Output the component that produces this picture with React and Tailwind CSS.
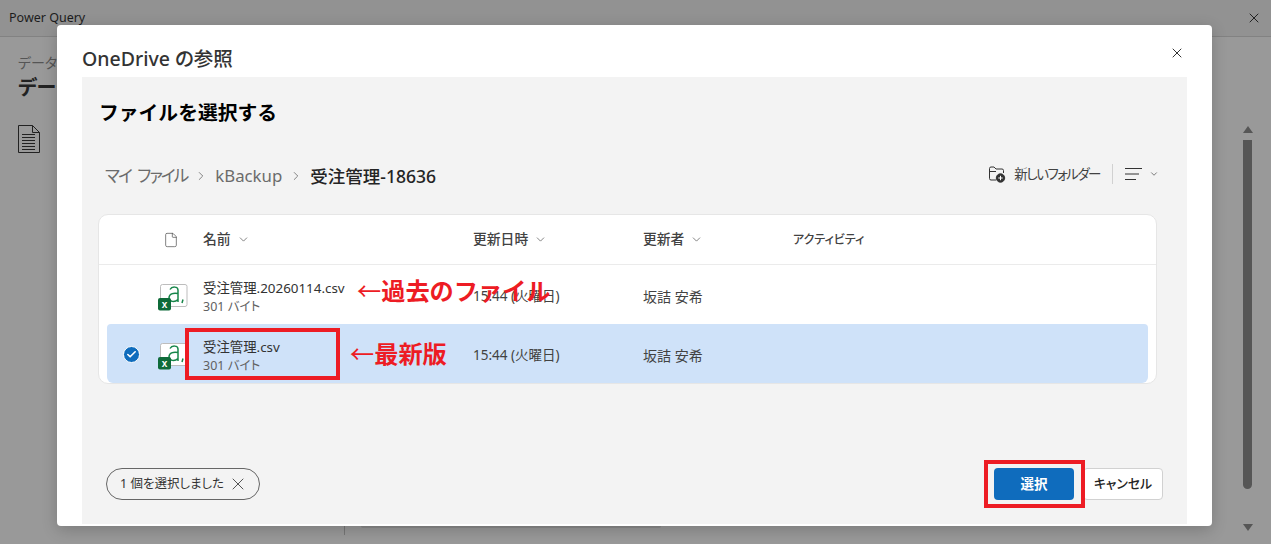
import { ChevronDown, ChevronRight, X, Check, File } from "lucide-react";

const font = "font-['Noto_Sans','Noto_Sans_CJK_JP',sans-serif] [font-feature-settings:'palt']";

function ExcelIcon() {
  return (
    <svg width="30" height="28" viewBox="0 0 30 28" className="mt-[1px] shrink-0">
      <rect x="2.500" y="1.500" width="26.500" height="22" rx="2" fill="#fff" stroke="#bdbdbd" />
      <path d="M12 6.500c2-3.500 8-3 8 .5v12M20 10.500c-5-1-9 .5-9 4.500s6 4.500 9 1.500M25 16.500l-1 3.500" fill="none" stroke="#17864a" strokeWidth="1.500" />
      <rect x="0" y="15" width="13" height="12.500" rx="2" fill="#0f6b3a" />
      <text x="6.500" y="24.500" textAnchor="middle" fontSize="10" fontWeight="700" fill="#fff" fontFamily="Liberation Sans, sans-serif">x</text>
    </svg>
  );
}

function HeaderCell({ label, className }) {
  return (
    <div className={`flex items-center gap-[6px] text-[13.800px] font-medium text-[#424242] ${className}`}>
      {label}
      <ChevronDown size={13} strokeWidth={1.2} className="text-[#424242]" />
    </div>
  );
}

function FileRow({ name, selected }) {
  return (
    <div className={`mx-[8px] flex h-[59px] items-center pt-[4px] ${selected ? "rounded-b-[6px] rounded-t-[4px] bg-[#cfe2f9]" : ""}`}>
      <div className="flex w-[51px] justify-center pb-[2px] pr-[3px]">
        {selected && (
          <div className="flex h-[17px] w-[17px] items-center justify-center rounded-full border border-white bg-[#0f6cbd]">
            <Check size={11} strokeWidth={3.5} className="text-white" />
          </div>
        )}
      </div>
      <ExcelIcon />
      <div className="ml-[15px] w-[270px] leading-none">
        <div className="text-[13.400px] leading-[18px] text-[#323232]">{name}</div>
        <div className="mt-[2px] text-[12.500px] leading-[16px] text-[#616161]">301 バイト</div>
      </div>
      <div className="w-[170px] text-[13.500px] text-[#424242]">15:44 (火曜日)</div>
      <div className="text-[14px] text-[#424242]">坂詰 安希</div>
    </div>
  );
}

export default function App() {
  return (
    <div className={`relative h-[544px] w-[1271px] overflow-hidden bg-[#999999] ${font}`}>
      {/* page behind the dialog */}
      <div className="flex h-[37px] items-center justify-between border-b border-[#828282] bg-[#929292] pl-[9px] pr-[9px]">
        <span className="text-[12.500px] text-[#1c1c1c]">Power Query</span>
        <X size={16} strokeWidth={1.500} className="text-[#222]" />
      </div>
      <div className="pl-[18px] pt-[17px]">
        <div className="text-[14px] leading-[18px] text-[#555]">データ</div>
        <div className="mt-[3px] text-[20px] font-bold leading-[26px] text-[#222]">データ</div>
        <svg width="22" height="28" viewBox="0 0 22 28" className="mt-[24px]" fill="none" stroke="#222" strokeWidth="1">
          <path d="M.500.500h14l7 7v20H.500zM14.500.500v7h7M4 9.500h13M4 12.500h13M4 15.500h13M4 18.500h13M4 21.500h13M4 24.500h13" />
        </svg>
      </div>
      <div className="absolute left-[1243px] top-[140px] h-[349px] w-[9px] rounded-b-full bg-[#565656]" />
      <div className="absolute left-[1243px] top-[126px] h-0 w-0 border-x-[5px] border-b-[7px] border-x-transparent border-b-[#565656]" />
      <div className="absolute left-[1243px] top-[524px] h-0 w-0 border-x-[5px] border-t-[7px] border-x-transparent border-t-[#565656]" />
      <div className="absolute left-[344px] top-[526px] h-[9px] w-px bg-[#777]" />
      <div className="absolute left-[361px] top-[526px] h-[2px] w-[300px] rounded-b bg-[#8a8a8a]" />

      {/* dialog */}
      <div className="absolute left-[57px] top-[25px] flex h-[501px] w-[1155px] flex-col rounded-[4px] bg-white px-[25px] shadow-[0_4px_16px_rgba(0,0,0,0.2)]">
        <div className="flex h-[52px] shrink-0 items-center justify-between pt-[16px]">
          <span className="text-[19.500px] font-medium text-[#333]">OneDrive の参照</span>
          <X size={16} strokeWidth={1.500} className="mr-[2px] mt-[-13px] text-[#333]" />
        </div>
        <div className="flex h-[447px] flex-col bg-[#f3f3f3] px-[16px]">
          <h2 className="ml-[1px] pt-[22px] text-[19.800px] font-bold leading-[28px] text-black [font-feature-settings:normal]">ファイルを選択する</h2>
          <div className="mt-[35px] flex h-[28px] w-[1061px] items-center justify-between pl-[7px]">
            <div className="flex items-center text-[16.800px] text-[#6b6b6b]">
              <span className="tracking-[-2px] [word-spacing:4px]">マイ ファイル</span>
              <ChevronRight size={14} strokeWidth={1.2} className="mx-[7px] text-[#555]" />
              <span>kBackup</span>
              <ChevronRight size={14} strokeWidth={1.2} className="mx-[7px] text-[#555]" />
              <span className="text-[17.500px] font-medium text-[#242424]">受注管理-18636</span>
            </div>
            <div className="mb-[4px] flex items-center text-[13.500px] text-[#424242]">
              <svg width="18" height="18" viewBox="0 0 18 18" fill="none" stroke="#333" strokeWidth="1">
                <path d="M8 15H3a1.500 1.500 0 0 1-1.500-1.500v-10A1.500 1.500 0 0 1 3 2h3l2 2h6a1.500 1.500 0 0 1 1.500 1.500V8M1.500 6.500H8" />
                <circle cx="12.500" cy="13" r="4.200" fill="#333" />
                <path d="M12.500 10.800v4.400M10.300 13h4.400" stroke="#fff" />
              </svg>
              <span className="ml-[8px] tracking-[-1.500px]">新しいフォルダー</span>
              <div className="mx-[12px] h-[20px] w-px bg-[#d1d1d1]" />
              <svg width="17" height="14" viewBox="0 0 17 14" stroke="#333" strokeWidth="1">
                <path d="M0 1.500h17M0 7h14M0 12.500h11" />
              </svg>
              <ChevronDown size={10} strokeWidth={1.500} className="ml-[7px] text-[#333]" />
            </div>
          </div>

          <div className="mt-[24px] h-[170px] w-[1059px] rounded-[10px] border border-[#e6e6e6] bg-white">
            <div className="flex h-[50px] items-center border-b border-[#ebebeb] pl-[64px]">
              <File size={16} strokeWidth={1} className="text-[#424242]" />
              <HeaderCell label="名前" className="ml-[24px] w-[270px]" />
              <HeaderCell label="更新日時" className="w-[170px]" />
              <HeaderCell label="更新者" className="w-[150px]" />
              <div className="text-[12px] font-medium text-[#424242]">アクティビティ</div>
            </div>
            <FileRow name="受注管理.20260114.csv" />
            <FileRow name="受注管理.csv" selected />
          </div>

          <div className="mt-[84px] flex items-center justify-between px-[8px]">
            <div className="flex h-[32px] w-[154px] items-center gap-[4px] rounded-full border border-[#666] pl-[13px] text-[12.500px] text-[#333]">
              1 個を選択しました
              <X size={20} strokeWidth={1} />
            </div>
            <div className="flex items-center">
              <button className="h-[32px] w-[80px] rounded-[4px] bg-[#0f6cbd] text-[13.500px] font-bold text-white">選択</button>
              <button className="ml-[9px] h-[32px] w-[80px] rounded-[4px] border border-[#d1d1d1] bg-white text-[12.800px] font-medium text-[#242424]">キャンセル</button>
            </div>
          </div>
        </div>
      </div>

      {/* annotations on top of the screenshot */}
      <div className="absolute left-[357px] top-[276px] text-[24.200px] font-bold leading-[30px] text-[#ed1c24] [font-feature-settings:normal]"><span className="font-normal">←</span>過去のファイル</div>
      <div className="absolute left-[350px] top-[339px] text-[24.200px] font-bold leading-[30px] text-[#ed1c24] [font-feature-settings:normal]"><span className="font-normal">←</span>最新版</div>
      <div className="absolute left-[185px] top-[328px] h-[52px] w-[155px] border-[4px] border-[#ed1c24]" />
      <div className="absolute left-[984px] top-[460px] h-[48px] w-[101px] border-[4px] border-[#ed1c24]" />
    </div>
  );
}
